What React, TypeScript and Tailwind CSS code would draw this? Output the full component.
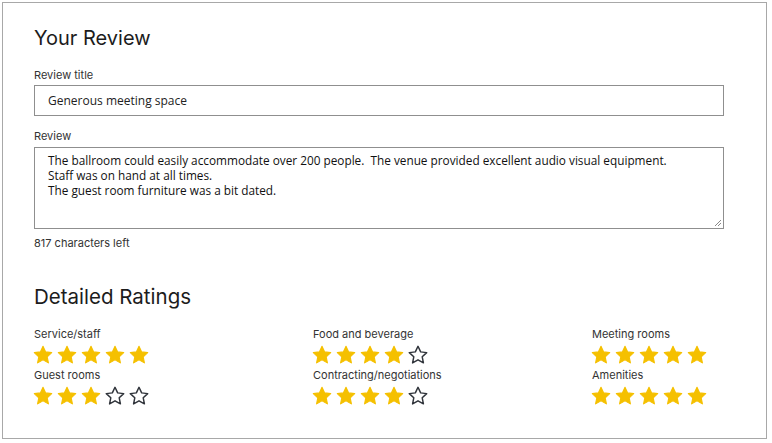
import {FC} from 'react';

const STAR_PATH =
  'M12 2.5l2.9 6.1 6.6.8-4.9 4.6 1.3 6.6L12 17.3l-5.9 3.3 1.3-6.6-4.9-4.6 6.6-.8z';

const Star: FC<{filled: boolean}> = ({filled}) => (
  <svg width="22" height="22" viewBox="0 0 24 24" className="shrink-0">
    <path
      d={STAR_PATH}
      fill={filled ? '#f5c000' : 'none'}
      stroke={filled ? '#f5c000' : '#2f333a'}
      strokeWidth={filled ? 1.2 : 1.6}
      strokeLinejoin="round"
    />
  </svg>
);

const Rating: FC<{label: string; value: number}> = ({label, value}) => (
  <div className="flex flex-col">
    <div className="text-[11px] leading-[14px] text-[#333]">{label}</div>
    <div className="flex gap-[2px] mt-[3px] -ml-[2px]">
      {[1, 2, 3, 4, 5].map(i => (
        <Star key={i} filled={i <= value} />
      ))}
    </div>
  </div>
);

const columns = [
  [
    {label: 'Service/staff', value: 5},
    {label: 'Guest rooms', value: 3},
  ],
  [
    {label: 'Food and beverage', value: 4},
    {label: 'Contracting/negotiations', value: 4},
  ],
  [
    {label: 'Meeting rooms', value: 5},
    {label: 'Amenities', value: 5},
  ],
];

const App: FC = () => {
  return (
    <div className="w-[772px] h-[443px] bg-white p-[2px]">
      <div
        className="h-[437px] w-[765px] border border-[#a8a8a8] bg-white pl-[31px] pr-[42px] pt-[22px] text-[#222]"
        style={{fontFamily: 'Inter, "Noto Sans", sans-serif'}}>
        <h2 className="text-[20px] leading-[26px] font-normal text-[#1c1c1c]">Your Review</h2>

        <label className="block mt-[17px] text-[11px] leading-[14px] text-[#333]">Review title</label>
        <div
          className="mt-[3px] h-[31px] border border-[#8f8f8f] flex items-center pl-[13px] text-[12px]"
          style={{fontFamily: '"Open Sans", sans-serif'}}>
          Generous meeting space
        </div>

        <label className="block mt-[13px] text-[11px] leading-[14px] text-[#333]">Review</label>
        <div
          className="relative mt-[4px] h-[82px] border border-[#8f8f8f] pl-[13px] pt-[5px] text-[11.8px] leading-[15px] text-[#111]"
          style={{fontFamily: '"Open Sans", sans-serif'}}>
          <div>The ballroom could easily accommodate over 200 people.&nbsp; The venue provided excellent audio visual equipment.</div>
          <div>Staff was on hand at all times.</div>
          <div>The guest room furniture was a bit dated.</div>
          <svg width="8" height="8" viewBox="0 0 8 8" className="absolute right-[1px] bottom-[1px]">
            <path d="M7 1L1 7M7 4L4 7" stroke="#888" strokeWidth="1" />
          </svg>
        </div>
        <div className="mt-[7px] text-[11px] leading-[14px] text-[#333]">817 characters left</div>

        <h2 className="mt-[35px] text-[20.5px] leading-[24px] font-normal text-[#1c1c1c]">Detailed Ratings</h2>

        <div className="mt-[18px] grid grid-cols-[279px_279px_1fr]">
          {columns.map((col, ci) => (
            <div key={ci} className="flex flex-col gap-[2px]">
              {col.map(r => (
                <Rating key={r.label} label={r.label} value={r.value} />
              ))}
            </div>
          ))}
        </div>
      </div>
    </div>
  );
};

export default App;
